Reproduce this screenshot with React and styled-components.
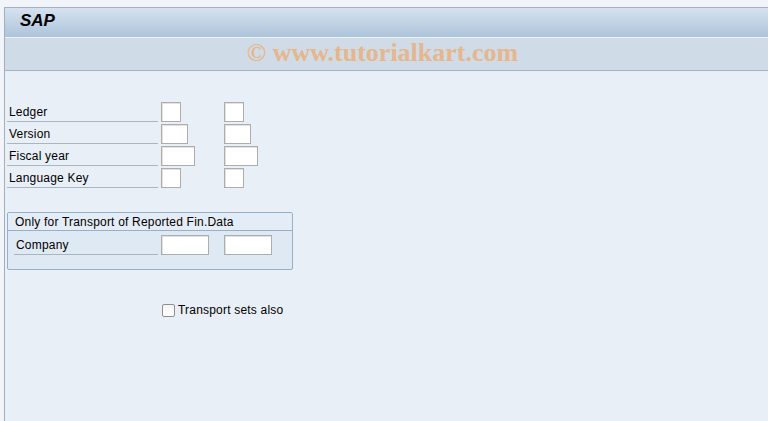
import React from "react";
import styled, { createGlobalStyle } from "styled-components";

const GlobalStyle = createGlobalStyle`
  html, body {
    margin: 0;
    padding: 0;
    background: #f1f4f9;
  }
  * {
    box-sizing: border-box;
  }
`;

const Screen = styled.div`
  width: 768px;
  height: 421px;
  padding: 7px 0 0 4px;
  background: #f1f4f9;
  font-family: "Liberation Sans", Arial, sans-serif;
  font-size: 12px;
  letter-spacing: 0.2px;
  color: #000;
  overflow: hidden;
`;

const Frame = styled.div`
  height: 100%;
  display: flex;
  flex-direction: column;
  border-left: 1px solid #a3aebd;
  border-top: 1px solid #a7b1c0;
  background: #e8eff7;
`;

const TitleBar = styled.div`
  height: 30px;
  padding-left: 15px;
  display: flex;
  align-items: center;
  background: linear-gradient(#d6e2ef, #adc4da);
  border-bottom: 1px solid #eef3f8;
`;

const Title = styled.span`
  font-size: 17px;
  font-weight: bold;
  font-style: italic;
  letter-spacing: 0;
  margin-top: -3px;
`;

const Toolbar = styled.div`
  height: 33px;
  display: flex;
  align-items: center;
  justify-content: center;
  background: #cfdce7;
  border-bottom: 1px solid #a6b1c1;
`;

const Watermark = styled.span`
  font-family: "Liberation Serif", "Times New Roman", serif;
  font-size: 26px;
  font-weight: bold;
  letter-spacing: 0;
  color: #e9b283;
  opacity: 0.9;
  margin-top: -3px;
  margin-left: -8px;
`;

const Body = styled.div`
  flex: 1;
  padding: 29px 0 0 2px;
`;

const Fields = styled.div`
  display: flex;
  flex-direction: column;
`;

const Row = styled.div`
  display: grid;
  grid-template-columns: ${(p) => p.$labelWidth || 151}px 60px 1fr;
  column-gap: 3px;
  height: 22px;
  align-items: center;
`;

const Label = styled.div`
  height: 22px;
  padding: 5px 0 0 2px;
  border-bottom: 1px solid #aab5c2;
  white-space: nowrap;
`;

const Input = styled.div`
  width: ${(p) => p.$w}px;
  height: 20px;
  background: #fff;
  border: 1px solid #adadad;
  box-shadow: inset 1px 1px 0 #e2e2e2;
  margin-top: 1px;
`;

const Group = styled.div`
  margin-top: 24px;
  width: 286px;
  height: 58px;
  border: 1px solid #94b0cb;
  border-radius: 2px;
  background: #dfe9f4;
`;

const GroupHeader = styled.div`
  height: 18px;
  padding: 2px 0 0 7px;
  border-bottom: 1px solid #94b0cb;
  background: #e4ecf6;
`;

const GroupBody = styled.div`
  padding: 2px 0 0 6px;
`;

const CheckRow = styled.label`
  margin: 33px 0 0 155px;
  display: flex;
  align-items: center;
  gap: 3px;
`;

const Box = styled.span`
  width: 13px;
  height: 13px;
  border: 1px solid #8f8f8f;
  border-radius: 2px;
  background: linear-gradient(#f4f4f4, #ffffff);
`;

const fields = [
  { label: "Ledger", w: 20 },
  { label: "Version", w: 27 },
  { label: "Fiscal year", w: 34 },
  { label: "Language Key", w: 20 },
];

export default function App() {
  return (
    <>
      <GlobalStyle />
      <Screen>
        <Frame>
          <TitleBar>
            <Title>SAP</Title>
          </TitleBar>
          <Toolbar>
            <Watermark>© www.tutorialkart.com</Watermark>
          </Toolbar>
          <Body>
            <Fields>
              {fields.map((f) => (
                <Row key={f.label}>
                  <Label>{f.label}</Label>
                  <Input $w={f.w} />
                  <Input $w={f.w} />
                </Row>
              ))}
            </Fields>
            <Group>
              <GroupHeader>Only for Transport of Reported Fin.Data</GroupHeader>
              <GroupBody>
                <Row $labelWidth={144}>
                  <Label>Company</Label>
                  <Input $w={48} />
                  <Input $w={48} />
                </Row>
              </GroupBody>
            </Group>
            <CheckRow>
              <Box />
              <span>Transport sets also</span>
            </CheckRow>
          </Body>
        </Frame>
      </Screen>
    </>
  );
}
